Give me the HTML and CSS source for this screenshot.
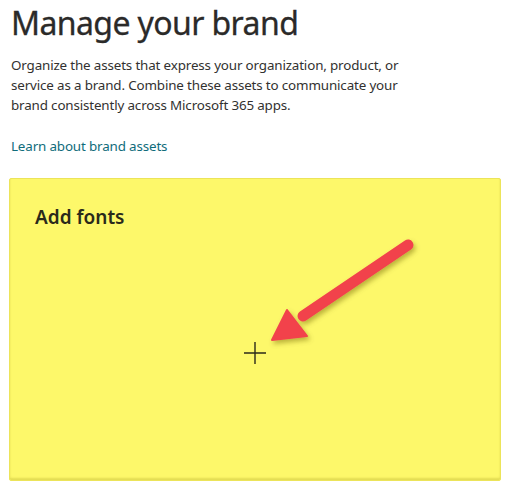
FILE: index.html
```html
<!DOCTYPE html>
<html>
<head>
<meta charset="utf-8">
<link rel="stylesheet" href="styles.css">
</head>
<body>
<div class="page">
  <h1 class="title">Manage your brand</h1>
  <p class="desc">Organize the assets that express your organization, product, or service as a brand. Combine these assets to communicate your brand consistently across Microsoft 365 apps.</p>
  <a class="learn" href="#">Learn about brand assets</a>
  <div class="card">
    <h2 class="card-title">Add fonts</h2>
    <div class="card-body">
      <svg class="plus" width="22" height="22" viewBox="0 0 22 22"><path d="M11 0v22M0 11h22" stroke="#2b2a1a" stroke-width="1.4" fill="none"/></svg>
    </div>
    <svg class="arrow" width="160" height="120" viewBox="0 0 160 120">
      <defs>
        <filter id="sh" x="-20%" y="-20%" width="140%" height="140%">
          <feDropShadow dx="2" dy="3" stdDeviation="2.5" flood-color="#6b5d00" flood-opacity="0.45"/>
        </filter>
      </defs>
      <g filter="url(#sh)">
        <path d="M143 16 L38 87" stroke="#f2434b" stroke-width="11" stroke-linecap="round" fill="none"/>
        <path d="M7 111 L22 81 L42 107 Z" fill="#f2434b" stroke="#f2434b" stroke-width="2" stroke-linejoin="round"/>
      </g>
    </svg>
  </div>
</div>
</body>
</html>
```
FILE: styles.css
```css
html, body { margin: 0; padding: 0; background: #fff; }
body { font-family: "Noto Sans", "Open Sans", sans-serif; color: #323130; }
.page { padding: 0 8px 0 9px; }
.title { margin: 0; padding: 2px 0 0 2px; font-size: 32px; font-weight: 400; line-height: 42px; letter-spacing: -0.6px; color: #2b2a29; -webkit-text-stroke: 0.3px #2b2a29; }
.desc { margin: 11px 0 0 2px; font-size: 13.4px; line-height: 20px; width: 400px; letter-spacing: -0.15px; }
.learn { display: block; margin: 21px 0 0 2px; font-size: 13.4px; line-height: 20px; color: #0f6c7b; text-decoration: none; letter-spacing: -0.15px; }
.card { position: relative; margin-top: 22px; width: 492px; height: 303px; box-sizing: border-box; background: #fdf86a; border: 1px solid #ece45a; border-radius: 2px; box-shadow: inset 0 -2px 2px rgba(180,170,40,0.35); display: flex; flex-direction: column; }
.card-title { margin: 26px 0 0 25px; font-size: 19px; font-weight: 600; line-height: 24px; color: #2a2a1a; }
.card-body { flex: 1; display: flex; justify-content: center; padding-top: 113px; }
.plus { display: block; }
.arrow { position: absolute; left: 255px; top: 50px; }
```
